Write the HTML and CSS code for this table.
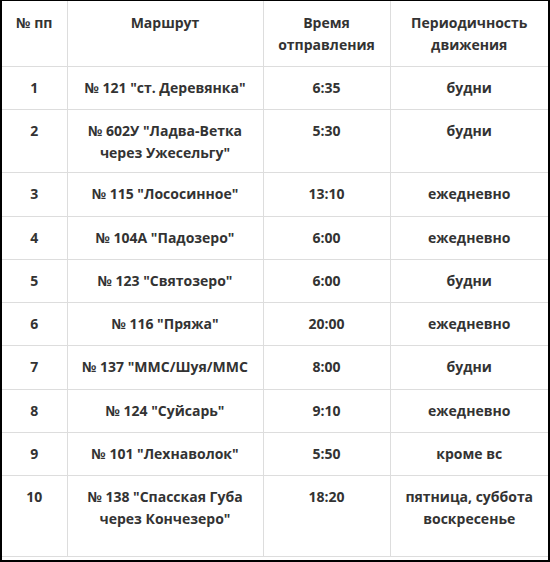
FILE: index.html
```html
<!DOCTYPE html>
<html lang="ru">
<head>
<meta charset="utf-8">
<link rel="stylesheet" href="styles.css">
</head>
<body>
<div class="frame">
<table class="schedule">
  <colgroup>
    <col class="c1"><col class="c2"><col class="c3"><col class="c4">
  </colgroup>
  <thead>
    <tr><th>№ пп</th><th>Маршрут</th><th>Время<br>отправления</th><th>Периодичность<br>движения</th></tr>
  </thead>
  <tbody>
    <tr><td>1</td><td>№ 121 "ст. Деревянка"</td><td>6:35</td><td>будни</td></tr>
    <tr><td>2</td><td>№ 602У "Ладва-Ветка<br>через Ужесельгу"</td><td>5:30</td><td>будни</td></tr>
    <tr><td>3</td><td>№ 115 "Лососинное"</td><td>13:10</td><td>ежедневно</td></tr>
    <tr><td>4</td><td>№ 104А "Падозеро"</td><td>6:00</td><td>ежедневно</td></tr>
    <tr><td>5</td><td>№ 123 "Святозеро"</td><td>6:00</td><td>будни</td></tr>
    <tr><td>6</td><td>№ 116 "Пряжа"</td><td>20:00</td><td>ежедневно</td></tr>
    <tr><td>7</td><td>№ 137 "ММС/Шуя/ММС</td><td>8:00</td><td>будни</td></tr>
    <tr><td>8</td><td>№ 124 "Суйсарь"</td><td>9:10</td><td>ежедневно</td></tr>
    <tr><td>9</td><td>№ 101 "Лехнаволок"</td><td>5:50</td><td>кроме вс</td></tr>
    <tr class="last"><td>10</td><td>№ 138 "Спасская Губа<br>через Кончезеро"</td><td>18:20</td><td>пятница, суббота<br>воскресенье</td></tr>
  </tbody>
</table>
</div>
</body>
</html>
```
FILE: styles.css
```css
html, body {
  margin: 0;
  padding: 0;
  background: #000;
}
.frame {
  box-sizing: border-box;
  width: 550px;
  height: 562px;
  border-style: solid;
  border-color: #000;
  border-width: 1px 2px 2px 2px;
  background: #fff;
  overflow: hidden;
}
.schedule {
  width: 546px;
  border-collapse: collapse;
  table-layout: fixed;
  font-family: "Open Sans", "Noto Sans", sans-serif;
  font-size: 14px;
  font-weight: 700;
  color: #333;
  line-height: 22px;
}
.c1 { width: 65px; }
.c2 { width: 196px; }
.c3 { width: 127px; }
.c4 { width: 158px; }
.schedule tbody tr {
  height: 43.3px;
}
.schedule th,
.schedule td {
  border: 1px solid #ddd;
  padding: 10px 4px 8px;
  text-align: center;
  vertical-align: top;
  font-weight: 700;
}
.schedule thead th {
  border-top: none;
  padding-top: 11px;
  padding-bottom: 10px;
}
.schedule th:first-child,
.schedule td:first-child {
  border-left: none;
}
.schedule th:last-child,
.schedule td:last-child {
  border-right: none;
}
.schedule tbody tr.last {
  height: 81px;
}
```
